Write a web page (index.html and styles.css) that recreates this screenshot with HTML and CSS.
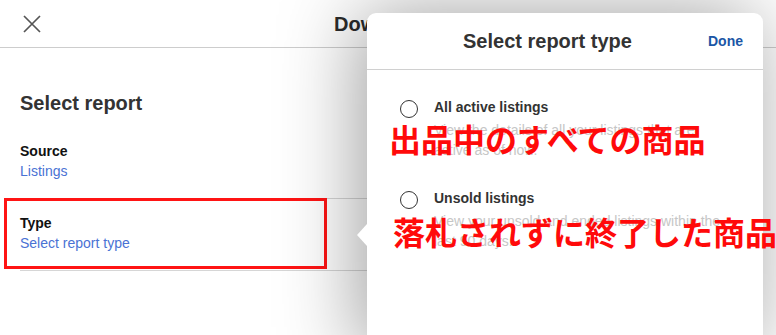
FILE: index.html
```html
<!DOCTYPE html>
<html lang="en">
<head>
<meta charset="utf-8">
<title>Download reports</title>
<link rel="stylesheet" href="styles.css">
</head>
<body>
<div class="app">
  <header class="topbar">
    <button class="close" aria-label="Close">
      <svg width="18" height="18" viewBox="0 0 18 18"><path d="M1 1 L17 17 M17 1 L1 17" stroke="#555" stroke-width="1.7" fill="none"/></svg>
    </button>
    <h1 class="page-title">Download reports</h1>
  </header>

  <main class="content">
    <h2 class="section-title">Select report</h2>
    <div class="row">
      <div class="row-text">
        <div class="row-label">Source</div>
        <div class="row-value">Listings</div>
      </div>
      <svg class="chev" width="9" height="13" viewBox="0 0 9 13"><path d="M1.2 1 L7.5 6.5 L1.2 12" stroke="#555" stroke-width="1.6" fill="none"/></svg>
    </div>
    <div class="row row-marked">
      <div class="row-text">
        <div class="row-label">Type</div>
        <div class="row-value">Select report type</div>
      </div>
      <svg class="chev" width="9" height="13" viewBox="0 0 9 13"><path d="M1.2 1 L7.5 6.5 L1.2 12" stroke="#555" stroke-width="1.6" fill="none"/></svg>
      <span class="mark-box"></span>
    </div>
  </main>

  <section class="popover">
    <div class="pop-head">
      <h2 class="pop-title">Select report type</h2>
      <span class="done">Done</span>
    </div>
    <div class="options">
      <div class="option">
        <span class="radio"></span>
        <div class="opt-text">
          <div class="opt-title">All active listings</div>
          <div class="opt-desc">View the details of all your listings that are active as of now.</div>
        </div>
      </div>
      <div class="option">
        <span class="radio"></span>
        <div class="opt-text">
          <div class="opt-title">Unsold listings</div>
          <div class="opt-desc">View your unsold and ended listings within the last 90 days.</div>
        </div>
      </div>
    </div>
    <div class="note note-1">出品中のすべての商品</div>
    <div class="note note-2">落札されずに終了した商品</div>
  </section>
</div>
</body>
</html>
```

FILE: styles.css
```css
html, body {
  margin: 0;
  padding: 0;
}
body {
  width: 776px;
  height: 335px;
  overflow: hidden;
  background: #fff;
  font-family: "Liberation Sans", Arial, sans-serif;
  color: #333;
}
.app {
  position: relative;
  width: 776px;
  height: 335px;
  overflow: hidden;
}
.topbar {
  display: flex;
  align-items: center;
  height: 47px;
  padding-left: 23px;
  border-bottom: 1px solid #cdcdcd;
}
.close {
  display: flex;
  padding: 0;
  border: 0;
  background: none;
  width: 18px;
  height: 18px;
}
.page-title {
  margin: 0 0 0 293px;
  font-size: 20px;
  line-height: 24px;
  font-weight: bold;
  color: #2b2b2b;
  white-space: nowrap;
}
.content {
  width: 400px;
  padding: 43px 0 0 20px;
}
.section-title {
  margin: 0 0 12px;
  font-size: 20px;
  line-height: 24px;
  font-weight: bold;
  color: #333;
}
.row {
  position: relative;
  display: flex;
  align-items: center;
  justify-content: space-between;
  padding: 14px 42px 17px 0;
  border-bottom: 1px solid #d6d6d6;
}
.row-label {
  font-size: 14px;
  line-height: 20px;
  font-weight: bold;
  color: #111;
}
.row-value {
  font-size: 14px;
  line-height: 20px;
  color: #4a72d4;
}
.chev {
  flex: none;
}
.mark-box {
  position: absolute;
  left: -16px;
  top: -1px;
  width: 323px;
  height: 71px;
  box-sizing: border-box;
  border: 3px solid #ff1414;
}
.popover {
  position: absolute;
  left: 367px;
  top: 13px;
  width: 396px;
  height: 340px;
  background: #fff;
  border-radius: 9px 9px 0 0;
  box-shadow: -8px 0 80px 0 rgba(0, 0, 0, 0.38);
}
.popover::before {
  content: "";
  position: absolute;
  left: -10px;
  top: 211px;
  border-top: 11px solid transparent;
  border-bottom: 11px solid transparent;
  border-right: 10px solid #fff;
}
.pop-head {
  display: flex;
  align-items: center;
  height: 56px;
  padding: 0 20px;
  border-bottom: 1px solid #d0d0d0;
}
.pop-title {
  flex: 1;
  margin: 0;
  text-align: center;
  font-size: 20px;
  line-height: 24px;
  font-weight: bold;
  color: #333;
}
.done {
  font-size: 14px;
  line-height: 20px;
  font-weight: bold;
  color: #1b56a6;
}
.options {
  padding: 27px 35px 0 33px;
}
.option {
  display: flex;
  gap: 16px;
  margin-bottom: 28px;
}
.radio {
  flex: none;
  width: 18px;
  height: 18px;
  margin-top: 3px;
  box-sizing: border-box;
  border: 1.5px solid #333;
  border-radius: 50%;
}
.opt-title {
  font-size: 14px;
  line-height: 20px;
  font-weight: bold;
  color: #333;
}
.opt-desc {
  margin-top: 3px;
  font-size: 14px;
  line-height: 20px;
  color: #c6c6c6;
}
.note {
  position: absolute;
  font-family: "Noto Sans CJK JP", sans-serif;
  font-weight: bold;
  font-size: 32px;
  line-height: 32px;
  color: #ff0a0a;
  white-space: nowrap;
}
.note-1 {
  left: 22px;
  top: 109px;
}
.note-2 {
  left: 26px;
  top: 202px;
}
```
